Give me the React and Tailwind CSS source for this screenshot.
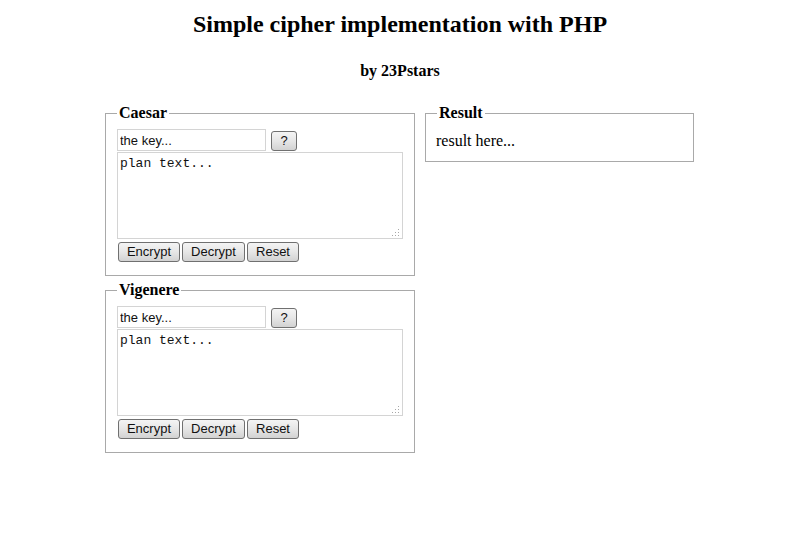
import React from 'react';

const serif = "font-['Liberation_Serif','Times_New_Roman',serif]";

function Grip() {
  return (
    <svg width="8" height="8" viewBox="0 0 8 8" className="pointer-events-none absolute bottom-[2px] right-[3px]">
      <rect x="6" y="0" width="1" height="1" fill="#a8a8a8" />
      <rect x="3" y="3" width="1" height="1" fill="#a8a8a8" />
      <rect x="6" y="3" width="1" height="1" fill="#a8a8a8" />
      <rect x="0" y="6" width="1" height="1" fill="#a8a8a8" />
      <rect x="3" y="6" width="1" height="1" fill="#a8a8a8" />
      <rect x="6" y="6" width="1" height="1" fill="#a8a8a8" />
    </svg>
  );
}

function Btn({ children, className = '' }) {
  return (
    <button
      className={`h-[20px] rounded-[3px] border border-[#707070] bg-gradient-to-b from-[#f4f4f4] via-[#e6e6e6] to-[#d2d2d2] font-['Liberation_Sans',Arial,sans-serif] text-[13px] leading-[18px] text-[#111] ${className}`}
    >
      {children}
    </button>
  );
}

function CipherBox({ title }) {
  return (
    <fieldset className="w-[310px] border border-[#a9a9a9] px-[11px] pt-[7px] pb-[13px]">
      <legend className={`px-[2px] text-[16px] font-bold leading-[18px] ${serif}`}>{title}</legend>
      <div className="flex items-center gap-[5px]">
        <input
          defaultValue="the key..."
          className="h-[22px] w-[149px] border border-[#d4d4d4] px-[2px] font-['Liberation_Sans',Arial,sans-serif] text-[13px] text-[#111] outline-none"
        />
        <Btn className="mt-[1px] w-[26px]">?</Btn>
      </div>
      <div className="relative mt-[1px]">
        <textarea
          defaultValue="plan text..."
          className="block h-[87px] w-full resize-none border border-[#d4d4d4] px-[2px] pt-[3px] font-['Liberation_Mono','Courier_New',monospace] text-[13px] leading-[15px] text-[#111] outline-none"
        />
        <Grip />
      </div>
      <div className="mt-[3px] ml-[1px] flex gap-[2px]">
        <Btn className="w-[62px]">Encrypt</Btn>
        <Btn className="w-[63px]">Decrypt</Btn>
        <Btn className="w-[52px]">Reset</Btn>
      </div>
    </fieldset>
  );
}

export default function App() {
  return (
    <div className={`min-h-[555px] bg-white text-black ${serif}`}>
      <div className="pr-[12px]">
        <h1 className="pt-[10px] text-center text-[24px] font-bold leading-[28px]">
          Simple cipher implementation with PHP
        </h1>
        <h3 className="mt-[24px] text-center text-[16px] font-bold leading-[18px]">by 23Pstars</h3>
      </div>

      <div className="mt-[24px] flex items-start gap-[10px] pl-[105px]">
        <div className="flex flex-col gap-[5px]">
          <CipherBox title="Caesar" />
          <CipherBox title="Vigenere" />
        </div>
        <fieldset className="w-[269px] border border-[#a9a9a9] px-[11px] pt-[10px] pb-[11px]">
          <legend className="px-[2px] text-[16px] font-bold leading-[18px]">Result</legend>
          <p className="-ml-[1px] text-[16px] leading-[18px]">result here...</p>
        </fieldset>
      </div>
    </div>
  );
}
